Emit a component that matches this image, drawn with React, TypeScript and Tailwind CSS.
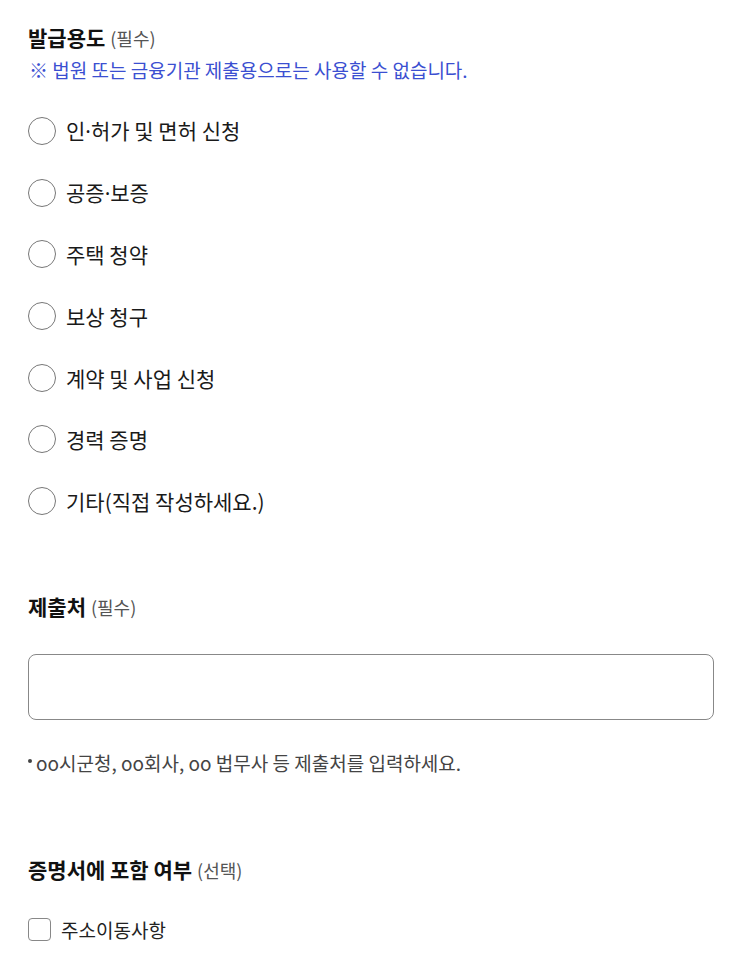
import { useState } from 'react';

const purposes = [
  '인·허가 및 면허 신청',
  '공증·보증',
  '주택 청약',
  '보상 청구',
  '계약 및 사업 신청',
  '경력 증명',
  '기타(직접 작성하세요.)',
];

const font = { fontFamily: '"Noto Sans CJK KR", "Noto Sans", sans-serif' };

// the CJK font draws the middle dot full width; take it from a Latin font instead
function Label({ text }: { text: string }) {
  const parts = text.split('·');
  return (
    <>
      {parts.map((part, i) => (
        <span key={i}>
          {i > 0 && <span className="font-['Noto_Sans',sans-serif]">·</span>}
          {part}
        </span>
      ))}
    </>
  );
}

export default function App() {
  const [purpose, setPurpose] = useState<string | null>(null);
  const [place, setPlace] = useState('');
  const [includeAddr, setIncludeAddr] = useState(false);

  return (
    <div className="min-h-screen bg-white pl-[28px] pr-[35px] pt-[23px] text-[#111]" style={font}>
      <h3 className="flex items-baseline gap-[5px] leading-[28px]">
        <span className="text-[21px] font-bold">발급용도</span>
        <span className="text-[18px] text-[#555]">(필수)</span>
      </h3>
      <p className="mt-[5px] pl-px text-[19px] leading-[26px] text-[#3b4fd1]">
        ※ 법원 또는 금융기관 제출용으로는 사용할 수 없습니다.
      </p>

      <div className="mt-[17px]">
        {purposes.map((p) => (
          <label key={p} className="flex h-[61.7px] cursor-pointer items-center gap-[10px]">
            <input
              type="radio"
              name="purpose"
              className="sr-only"
              checked={purpose === p}
              onChange={() => setPurpose(p)}
            />
            <span
              className={`flex h-[28px] w-[28px] shrink-0 items-center justify-center rounded-full border-[1.5px] ${
                purpose === p ? 'border-[#3b4fd1]' : 'border-[#777]'
              }`}
            >
              {purpose === p && <span className="h-[14px] w-[14px] rounded-full bg-[#3b4fd1]" />}
            </span>
            <span className="text-[21px] leading-[28px] text-[#1a1a1a]">
              <Label text={p} />
            </span>
          </label>
        ))}
      </div>

      <h3 className="mt-[60px] flex items-baseline gap-[5px] leading-[28px]">
        <span className="text-[21px] font-bold">제출처</span>
        <span className="text-[18px] text-[#555]">(필수)</span>
      </h3>
      <input
        type="text"
        value={place}
        onChange={(e) => setPlace(e.target.value)}
        className="mt-[33px] block h-[66px] w-full rounded-[8px] border border-[#888] px-4 text-[18px] outline-none"
      />
      <p className="mt-[30px] flex items-start gap-[4px] text-[19px] leading-[26px] text-[#444]">
        <span className="mt-[9px] h-[4px] w-[4px] shrink-0 rounded-full bg-[#444]" />
        oo시군청, oo회사, oo 법무사 등 제출처를 입력하세요.
      </p>

      <h3 className="mt-[79px] flex items-baseline gap-[5px] leading-[28px]">
        <span className="text-[21px] font-bold">증명서에 포함 여부</span>
        <span className="text-[18px] text-[#555]">(선택)</span>
      </h3>
      <label className="mt-[33px] flex cursor-pointer items-center gap-[10px]">
        <input
          type="checkbox"
          className="sr-only"
          checked={includeAddr}
          onChange={(e) => setIncludeAddr(e.target.checked)}
        />
        <span
          className={`h-[23px] w-[23px] shrink-0 rounded-[4px] border-[1.5px] ${
            includeAddr ? 'border-[#3b4fd1] bg-[#3b4fd1]' : 'border-[#888]'
          }`}
        />
        <span className="text-[19px] leading-[26px] text-[#222]">주소이동사항</span>
      </label>
    </div>
  );
}
